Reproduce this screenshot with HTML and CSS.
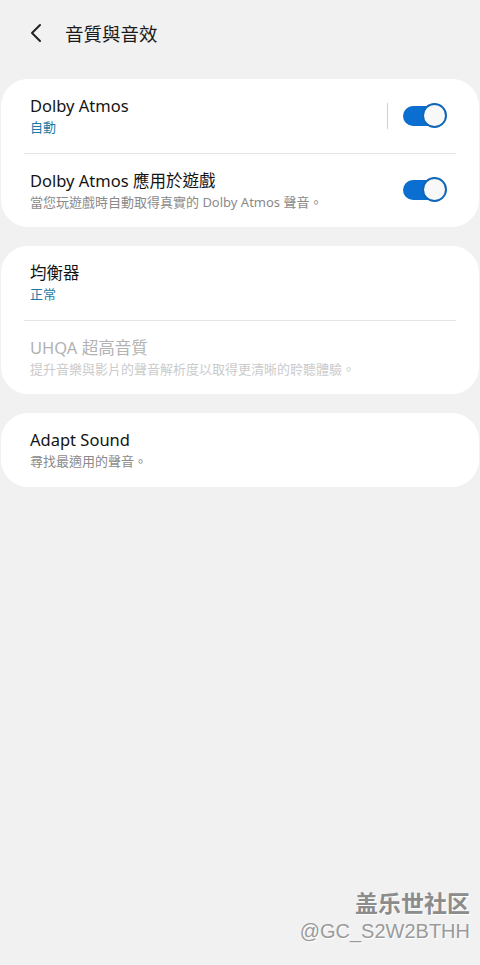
FILE: index.html
```html
<!DOCTYPE html>
<html lang="zh-Hant">
<head>
<meta charset="utf-8">
<link rel="stylesheet" href="styles.css">
</head>
<body>
<div class="screen">
  <header class="topbar">
    <svg class="back" width="14" height="20" viewBox="0 0 14 20"><path d="M11 2 L3 10 L11 18" fill="none" stroke="#222" stroke-width="2" stroke-linecap="round" stroke-linejoin="round"/></svg>
    <h1 class="title">音質與音效</h1>
  </header>

  <section class="card">
    <div class="row">
      <div class="text">
        <div class="name">Dolby Atmos</div>
        <div class="sub blue">自動</div>
      </div>
      <div class="vline"></div>
      <div class="toggle"><span class="thumb"></span></div>
    </div>
    <div class="divider"></div>
    <div class="row">
      <div class="text">
        <div class="name">Dolby Atmos 應用於遊戲</div>
        <div class="sub">當您玩遊戲時自動取得真實的 Dolby Atmos 聲音。</div>
      </div>
      <div class="toggle"><span class="thumb"></span></div>
    </div>
  </section>

  <section class="card">
    <div class="row">
      <div class="text">
        <div class="name">均衡器</div>
        <div class="sub blue">正常</div>
      </div>
    </div>
    <div class="divider"></div>
    <div class="row disabled">
      <div class="text">
        <div class="name">UHQA 超高音質</div>
        <div class="sub">提升音樂與影片的聲音解析度以取得更清晰的聆聽體驗。</div>
      </div>
    </div>
  </section>

  <section class="card">
    <div class="row">
      <div class="text">
        <div class="name">Adapt Sound</div>
        <div class="sub">尋找最適用的聲音。</div>
      </div>
    </div>
  </section>

  <div class="watermark">
    <div class="wm1">盖乐世社区</div>
    <div class="wm2">@GC_S2W2BTHH</div>
  </div>
</div>
</body>
</html>
```
FILE: styles.css
```css
html, body {
  margin: 0;
  padding: 0;
  background: #f1f1f1;
}
body {
  font-family: "Noto Sans", "Noto Sans CJK TC", sans-serif;
  color: #111;
}
.screen {
  position: relative;
  width: 480px;
  height: 965px;
  overflow: hidden;
  display: flex;
  flex-direction: column;
  gap: 19px;
}
.topbar {
  height: 60px;
  display: flex;
  align-items: center;
  padding-left: 29px;
  gap: 22px;
}
.back { display: block; margin-top: 6px; }
.title {
  margin: 0;
  margin-top: 6px;
  font-family: "Noto Sans CJK TC", sans-serif;
  font-size: 18.5px;
  font-weight: 400;
  color: #1a1a1a;
}
.card {
  background: #fff;
  margin: 0 1px;
  border-radius: 27px;
  display: flex;
  flex-direction: column;
}
.row {
  height: 73.5px;
  display: flex;
  align-items: center;
  padding: 0 33px 0 29px;
}
.text {
  flex: 1;
  display: flex;
  flex-direction: column;
  gap: 1px;
}
.name {
  font-size: 16.5px;
  line-height: 22px;
  color: #141414;
}
.sub {
  font-size: 13px;
  line-height: 18px;
  color: #8a8a8a;
}
.sub.blue { color: #1a7aa3; }
.disabled .name { color: #b2b2b2; }
.disabled .sub { color: #cbcbcb; }
.divider {
  height: 1px;
  background: #e4e4e4;
  margin: 0 23px;
}
.vline {
  width: 1px;
  height: 26px;
  background: #cfcfcf;
  margin-right: 15px;
}
.toggle {
  position: relative;
  width: 37px;
  height: 20px;
  border-radius: 10px;
  background: #0a6fd0;
  margin-right: 6px;
}
.thumb {
  position: absolute;
  right: -7px;
  top: -3px;
  width: 21px;
  height: 21px;
  border-radius: 50%;
  background: #f8f8f8;
  border: 2px solid #1066b8;
}
.watermark {
  position: absolute;
  right: 10px;
  top: 886px;
  text-align: right;
}
.wm1 {
  font-family: "Noto Sans CJK SC", sans-serif;
  font-size: 23px;
  font-weight: 700;
  color: #8c8c8c;
  line-height: 32px;
  text-shadow: 1px 1px 0 #ffffff;
}
.wm2 {
  font-family: "Liberation Sans", sans-serif;
  font-size: 20px;
  color: #9a9a9a;
  line-height: 26px;
  text-shadow: 1px 1px 0 #fff;
}
```
